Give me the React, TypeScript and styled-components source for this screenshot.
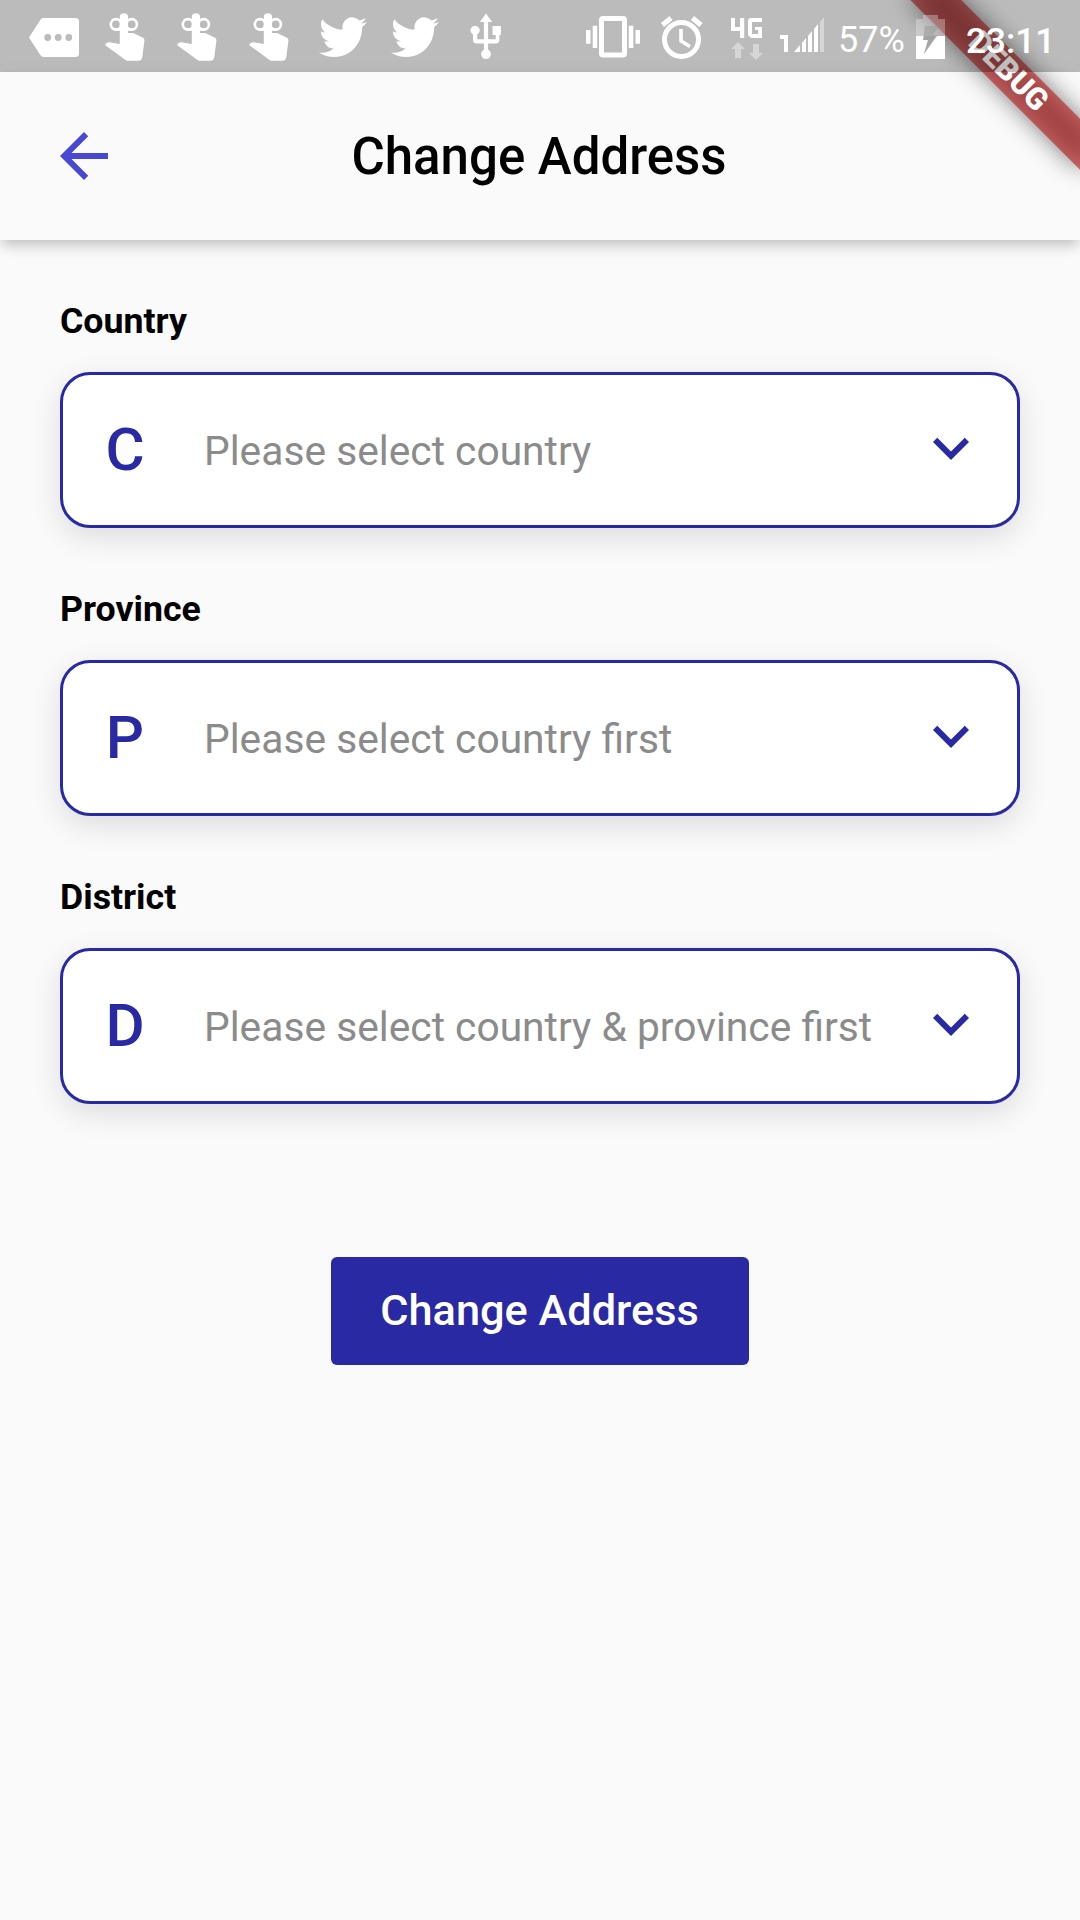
import React from "react";
import styled, { createGlobalStyle, css } from "styled-components";

const Global = createGlobalStyle`
  * { box-sizing: border-box; }
  body { margin: 0; background: #fafafa; font-family: Roboto, "Liberation Sans", sans-serif; }
`;

const Screen = styled.main`
  position: relative;
  width: 1080px;
  height: 1920px;
  overflow: hidden;
  display: flex;
  flex-direction: column;
  background: #fafafa;
  color: #000;
`;

const StatusBar = styled.div`
  position: relative;
  z-index: 3;
  flex: none;
  height: 72px;
  display: flex;
  justify-content: space-between;
  background: rgba(0, 0, 0, 0.25);
  color: #fff;
`;

const Group = styled.div<{ $start?: number }>`
  display: flex;
  align-items: flex-start;
  padding-left: ${(p) => p.$start ?? 0}px;
`;

const Glyph = styled.svg<{ $gap?: number }>`
  flex: none;
  display: block;
  fill: currentColor;
  margin-left: ${(p) => p.$gap ?? 0}px;
`;

const StatusText = styled.span<{ $weight: number; $width: number; $size: number; $gap: number; $top: number }>`
  flex: none;
  width: ${(p) => p.$width}px;
  margin-left: ${(p) => p.$gap}px;
  padding-top: ${(p) => p.$top}px;
  font-size: ${(p) => p.$size}px;
  font-weight: ${(p) => p.$weight};
  line-height: 42px;
  white-space: nowrap;
`;

const Header = styled.header`
  position: relative;
  z-index: 1;
  flex: none;
  height: 168px;
  display: grid;
  grid-template-columns: 168px 1fr 170px;
  align-items: center;
  background: #fafafa;
  box-shadow: 0 6px 12px -3px rgba(0, 0, 0, 0.17), 0 9px 14px 0 rgba(0, 0, 0, 0.05),
    0 3px 18px 0 rgba(0, 0, 0, 0.06);
`;

const BackButton = styled.button`
  width: 72px;
  height: 72px;
  margin-left: 48px;
  padding: 0;
  border: 0;
  background: none;
  color: #4848d2;
`;

const Title = styled.h1`
  margin: 0;
  padding-top: 2px;
  text-align: center;
  font-size: 51px;
  font-weight: 500;
  line-height: 60px;
`;

const Form = styled.form`
  display: flex;
  flex-direction: column;
  padding: 60px 60px 0;
`;

const Field = styled.div`
  height: 288px;
`;

const Label = styled.label`
  display: block;
  height: 72px;
  font-size: 35.7px;
  font-weight: 700;
  line-height: 43px;
`;

const Select = styled.div`
  display: flex;
  align-items: center;
  height: 156px;
  border: 3px solid #2929a3;
  border-radius: 30px;
  background: #fff;
  box-shadow: 0 9px 30px rgba(0, 0, 0, 0.12);
`;

const Initial = styled.span`
  width: 124px;
  text-align: center;
  color: #2929a3;
  font-size: 60px;
  font-weight: 500;
  line-height: 70px;
`;

const Placeholder = styled.span`
  flex: 1;
  padding-left: 17px;
  padding-top: 2px;
  color: #8b8b8b;
  font-size: 40.75px;
  line-height: 48px;
  white-space: nowrap;
`;

const Chevron = styled.svg`
  flex: none;
  width: 72px;
  height: 72px;
  margin: 0 30px 4px 0;
  fill: #2929a3;
`;

const Submit = styled.button`
  align-self: center;
  width: 417.4px;
  height: 108px;
  margin-top: 93px;
  padding: 0 1px 1px 0;
  border: 0;
  border-radius: 6px;
  background: #2929a3;
  color: #fff;
  font: 500 43.3px/51px Roboto, "Liberation Sans", sans-serif;
`;

const BannerBand = css`
  position: absolute;
  left: 960px;
  top: 84px;
  width: 240px;
  height: 36px;
  transform-origin: 120px -84px;
  transform: rotate(45deg);
`;

const BannerShadow = styled.div`
  ${BannerBand}
  z-index: 2;
  background: rgba(0, 0, 0, 0.5);
  filter: blur(12px);
`;

const Banner = styled.div`
  ${BannerBand}
  z-index: 2;
  background: rgba(183, 28, 28, 0.627);
  color: #fff;
  text-align: center;
  font-size: 30.6px;
  font-weight: 900;
  line-height: 33px;
`;

const TWITTER =
  "M23.95 4.57a10 10 0 0 1-2.82.77 4.96 4.96 0 0 0 2.16-2.72c-.95.55-2 .95-3.13 1.18a4.92 4.92 0 0 0-8.38 4.48C7.69 8.09 4.07 6.13 1.64 3.16a4.82 4.82 0 0 0-.67 2.48c0 1.71.87 3.21 2.19 4.1a4.9 4.9 0 0 1-2.23-.62v.06a4.92 4.92 0 0 0 3.95 4.83 5 5 0 0 1-2.21.08 4.94 4.94 0 0 0 4.6 3.42A9.87 9.87 0 0 1 0 19.54a13.99 13.99 0 0 0 7.55 2.21c9.05 0 14-7.5 14-13.98 0-.21 0-.42-.02-.63a9.94 9.94 0 0 0 2.42-2.57z";

const ReminderIcon = ({ gap }: { gap: number }) => (
  <Glyph $gap={gap} width="40" height="72" viewBox="105 0 40 72">
    <g fill="none" stroke="currentColor" strokeWidth="2.6">
      <circle cx="116" cy="24.3" r="5.2" />
      <circle cx="131.700" cy="24.3" r="5.2" />
      <path d="M115 29.6h18" />
    </g>
    <path d="M119.8 44V17.3a4.1 4.1 0 0 1 8.2 0V33h4.2c.8 0 1.400.1 2 .4l8.300 4.200c1.500.7 2.100 1.900 1.900 3.500l-2.200 16.500c-.3 2-1.500 3.100-3.500 3.100H127.500c-1.100 0-2-.4-2.700-1.100L105 44.900l1.700-1.900c.9-.8 1.700-1 2.800-.8z" />
  </Glyph>
);

const TwitterIcon = ({ gap }: { gap: number }) => (
  <Glyph $gap={gap} width="48" height="72" viewBox="0 0 48 72">
    <path transform="translate(0 12.700) scale(2 2.040)" d={TWITTER} />
  </Glyph>
);

const fields = [
  { label: "Country", initial: "C", hint: "Please select country" },
  { label: "Province", initial: "P", hint: "Please select country first" },
  { label: "District", initial: "D", hint: "Please select country & province first" },
];

export default function App() {
  return (
    <Screen>
      <Global />
      <StatusBar>
        <Group $start={29}>
          <Glyph width="50" height="72" viewBox="29 0 50 72">
            <path
              fillRule="evenodd"
              d="M44 18h31.500c2.400 0 3.500 1.200 3.500 3.500v32c0 2.400-1.200 3.500-3.500 3.500H44c-1.700 0-2.800-.6-3.700-1.900L29 37.500l11.300-17.600C41.200 18.600 42.300 18 44 18zm3.700 16.100a3.400 3.400 0 1 0 0 6.800 3.400 3.400 0 0 0 0-6.800zm10.500 0a3.400 3.400 0 1 0 0 6.800 3.400 3.400 0 0 0 0-6.800zm10.600 0a3.400 3.400 0 1 0 0 6.800 3.400 3.400 0 0 0 0-6.800z"
            />
          </Glyph>
          <ReminderIcon gap={26} />
          <ReminderIcon gap={32} />
          <ReminderIcon gap={32} />
          <TwitterIcon gap={30} />
          <TwitterIcon gap={24} />
          <Glyph $gap={31} width="32" height="72" viewBox="470 0 32 72">
            <path d="M486 13.500l6.200 8.500h-4.100v17.200h7.600V35h-3.200v-9h8.400v9h-1.500v4.800c0 2.400-1.300 3.700-3.700 3.700h-7.600v6.200a4.900 4.900 0 1 1-4.200 0v-6.200h-7.200c-2.400 0-3.700-1.300-3.700-3.700v-5.300a4.600 4.600 0 1 1 4.200 0v4.700h6.700V22h-4.100z" />
          </Glyph>
        </Group>
        <Group>
          <Glyph width="54" height="72" viewBox="586 0 54 72">
            <path
              fillRule="evenodd"
              d="M603 16h20a4 4 0 0 1 4 4v33.500a4 4 0 0 1-4 4h-20a4 4 0 0 1-4-4V20a4 4 0 0 1 4-4zm1 5v31.500h18V21zM586 30h4.500v13.800H586zm6.700-4.300h4.500V48h-4.500zm36.100 0h4.500V48h-4.500zm6.700 4.300h4.500v13.800h-4.500z"
            />
          </Glyph>
          <Glyph $gap={21} width="42" height="72" viewBox="661 0 42 72">
            <g fill="none" stroke="currentColor">
              <circle cx="681.500" cy="39.500" r="17" strokeWidth="5" />
              <path d="M681 29v12l9 5.500" strokeWidth="3.600" />
              <path d="M662.500 25l8.500-7M701 25l-8.500-7" strokeWidth="5" />
            </g>
          </Glyph>
          <Glyph $gap={27} width="34" height="72" viewBox="730 0 34 72">
            <path d="M731 18h4v9h5v-9h4.200v20H740v-7h-9zM750 18h12v4h-10v12h6v-4h-3v-3h7v11h-11l-3-3V20z" />
            <path opacity=".4" d="M738 42l7 7h-4v9h-6v-9h-4zM753 44h6v9h4l-7 7-7-7h4z" />
          </Glyph>
          <Glyph $gap={16} width="45" height="72" viewBox="780 0 45 72">
            <path d="M780 35h8v17h-4V39h-4zM794 52l6-7v7zM802 43l4-5v14h-4zM808 36l4-5v21h-4zM814 29l4-5v28h-4z" />
            <path opacity=".4" d="M820 22l4-5v35h-4z" />
          </Glyph>
          <StatusText $weight={400} $width={78} $size={36} $gap={13} $top={19}>
            57%
          </StatusText>
          <Glyph width="29" height="72" viewBox="916 0 29 72">
            <path opacity=".3" d="M916 19h7v-4h15v4h7v17h-29z" />
            <path d="M916 36h8l-1 4h5l-4 14 12-18h9v23h-29z" />
            <path fill="#999" opacity=".55" d="M925 26h14l-6 9h5l-14 19 4-14h-5z" />
          </Glyph>
          <StatusText $weight={500} $width={114} $size={35.2} $gap={21} $top={20}>
            23:11
          </StatusText>
        </Group>
      </StatusBar>
      <Header>
        <BackButton aria-label="Back">
          <Glyph width="72" height="72" viewBox="0 0 24 24">
            <path d="M20 11H7.830l5.590-5.590L12 4l-8 8 8 8 1.410-1.410L7.830 13H20v-2z" />
          </Glyph>
        </BackButton>
        <Title>Change Address</Title>
      </Header>
      <BannerShadow />
      <Banner>DEBUG</Banner>
      <Form>
        {fields.map((f) => (
          <Field key={f.label}>
            <Label>{f.label}</Label>
            <Select>
              <Initial>{f.initial}</Initial>
              <Placeholder>{f.hint}</Placeholder>
              <Chevron viewBox="0 0 24 24">
                <path d="M16.590 8.590L12 13.170 7.410 8.590 6 10l6 6 6-6z" />
              </Chevron>
            </Select>
          </Field>
        ))}
        <Submit type="button">Change Address</Submit>
      </Form>
    </Screen>
  );
}
